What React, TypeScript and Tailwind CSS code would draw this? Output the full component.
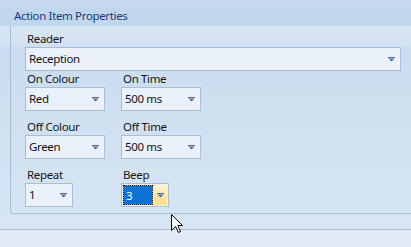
import React from "react";

function Arrow() {
  return (
    <svg width="7" height="5" viewBox="0 0 7 5" className="block">
      <rect x="0" y="0" width="7" height="1" fill="#4d6e9e" />
      <polygon points="0.5,1.5 6.5,1.5 3.5,4.6" fill="#4d6e9e" />
    </svg>
  );
}

function Dropdown({ text, width }: { text: string; width: string }) {
  return (
    <div
      className={`${width} h-[24px] border border-[#a8bdd9] bg-[#eaf1fb] flex items-center justify-between pl-[3px] pr-[5px] text-[#111]`}
    >
      <span className="leading-[22px]">{text}</span>
      <Arrow />
    </div>
  );
}

function Label({ text }: { text: string }) {
  return <div className="h-[16px] leading-[16px] pl-[2px] text-[#161616]">{text}</div>;
}

export default function App() {
  return (
    <div
      className="w-[411px] h-[247px] overflow-hidden relative flex flex-col text-[11.5px] tracking-[-0.35px]"
      style={{ fontFamily: "'Noto Sans', 'Open Sans', sans-serif" }}
    >
      <div className="h-[7px] bg-[#c6d8ec] shrink-0" />
      <div className="h-[19px] shrink-0 bg-[#bfd8ee] pl-[14px] leading-[17px] text-[#22377a]">
        Action Item Properties
      </div>
      <div className="h-[203px] shrink-0 bg-[linear-gradient(to_bottom,#d9e5f2_0px,#d4e2f1_18px,#cadcef_24px,#d8e6f3_100%)]">
        <div className="ml-[10px] w-[430px] h-[188px] border-l border-b border-[#a9bed6] rounded-bl-[3px] pl-[14px] pt-[5px]">
          <Label text="Reader" />
          <div className="w-[376px]">
            <Dropdown text="Reception" width="w-[376px]" />
          </div>
          <div className="grid grid-cols-[96px_96px]">
            <div>
              <Label text="On Colour" />
              <Dropdown text="Red" width="w-[80px]" />
            </div>
            <div>
              <Label text="On Time" />
              <Dropdown text="500 ms" width="w-[80px]" />
            </div>
          </div>
          <div className="grid grid-cols-[96px_96px] mt-[8px]">
            <div>
              <Label text="Off Colour" />
              <Dropdown text="Green" width="w-[80px]" />
            </div>
            <div>
              <Label text="Off Time" />
              <Dropdown text="500 ms" width="w-[80px]" />
            </div>
          </div>
          <div className="grid grid-cols-[96px_96px] mt-[8px]">
            <div>
              <Label text="Repeat" />
              <Dropdown text="1" width="w-[48px]" />
            </div>
            <div>
              <Label text="Beep" />
              <div className="w-[48px] h-[24px] border border-[#a8bdd9] bg-[#eaf1fb] flex p-[1px] gap-[1px]">
                <div className="flex-1 bg-[#e8a341]">
                  <div className="h-full border border-dotted border-[#111] bg-[#0b72d6] bg-clip-padding pl-[2px] leading-[20px] text-white">
                    3
                  </div>
                </div>
                <div className="w-[13px] bg-[linear-gradient(to_bottom,#fff6d6,#fdd98a)] flex items-center justify-center">
                  <Arrow />
                </div>
              </div>
            </div>
          </div>
        </div>
      </div>
      <div className="flex-1 border-t border-[#a9bdd3] bg-[#e3eaf5]" />
      <svg
        width="13"
        height="20"
        viewBox="0 0 13 20"
        className="absolute left-[171px] top-[214px]"
      >
        <path
          d="M0.5,0.5 L0.5,16.5 L4.5,12.5 L7.5,18.5 L9.5,17.5 L6.8,11.5 L11.5,11.5 Z"
          fill="#fff"
          stroke="#000"
          strokeWidth="1"
          strokeLinejoin="miter"
        />
      </svg>
    </div>
  );
}
